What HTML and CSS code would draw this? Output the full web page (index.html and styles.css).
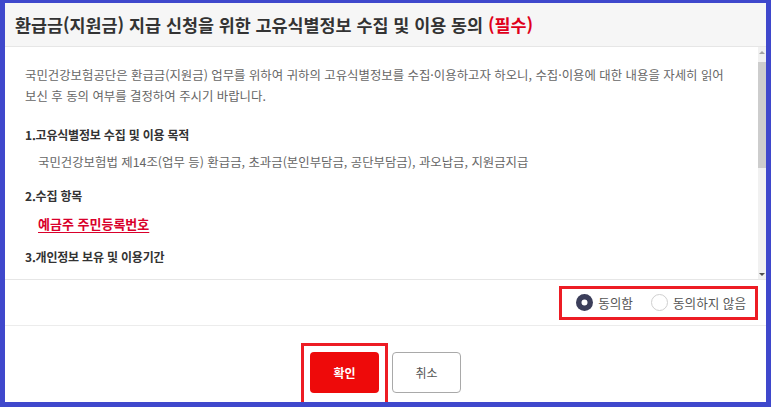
FILE: index.html
```html
<!DOCTYPE html>
<html lang="ko">
<head>
    <meta charset="UTF-8">
    <meta name="viewport" content="width=device-width, initial-scale=1.0">
    <title>고유식별정보 수집 및 이용 동의</title>
    <link rel="stylesheet" href="styles.css">
</head>
<body>
    <div class="modal">
        <div class="modal-header">
            <h2 class="modal-title">환급금(지원금) 지급 신청을 위한 고유식별정보 수집 및 이용 동의 <span class="required">(필수)</span></h2>
        </div>

        <div class="modal-body">
            <div class="body-scroll">
                <p class="intro">국민건강보험공단은 환급금(지원금) 업무를 위하여 귀하의 고유식별정보를 수집·이용하고자 하오니, 수집·이용에 대한 내용을 자세히 읽어<br>보신 후 동의 여부를 결정하여 주시기 바랍니다.</p>

                <div class="term-section">
                    <h3 class="term-title">1.고유식별정보 수집 및 이용 목적</h3>
                    <p class="term-text">국민건강보험법 제14조(업무 등) 환급금, 초과금(본인부담금, 공단부담금), 과오납금, 지원금지급</p>
                </div>

                <div class="term-section">
                    <h3 class="term-title">2.수집 항목</h3>
                    <p class="term-text highlight">예금주 주민등록번호</p>
                </div>

                <div class="term-section later">
                    <h3 class="term-title">3.개인정보 보유 및 이용기간</h3>
                    <p class="term-text">수집·이용 목적 달성 후 관련 법령에 따라 5년간 보관 후 파기</p>
                </div>

                <div class="term-section later">
                    <h3 class="term-title">4.동의를 거부할 권리 및 동의 거부 시 불이익</h3>
                    <p class="term-text">귀하는 고유식별정보 수집·이용에 대한 동의를 거부할 권리가 있습니다.</p>
                </div>
            </div>

            <div class="scrollbar">
                <span class="scroll-arrow up"></span>
                <div class="scroll-track">
                    <div class="scroll-thumb"></div>
                </div>
                <span class="scroll-arrow down"></span>
            </div>
        </div>

        <div class="agree-row">
            <div class="agree-group">
                <label class="radio-item">
                    <span class="radio checked"></span>
                    <span class="radio-label">동의함</span>
                </label>
                <label class="radio-item">
                    <span class="radio"></span>
                    <span class="radio-label">동의하지 않음</span>
                </label>
            </div>
        </div>

        <div class="modal-footer">
            <div class="mark-box">
                <button class="button primary">확인</button>
            </div>
            <button class="button">취소</button>
        </div>
    </div>
</body>
</html>
```

FILE: styles.css
```css
* {
    margin: 0;
    padding: 0;
    box-sizing: border-box;
    font-family: "Noto Sans CJK KR", "Noto Sans", sans-serif;
}

body {
    height: 407px;
    padding: 3px 5px 5px;
    background-color: #3f48cc;
    overflow: hidden;
}

.modal {
    height: 399px;
    background-color: #fff;
    display: flex;
    flex-direction: column;
    overflow: hidden;
}

.modal-header {
    height: 44px;
    flex-shrink: 0;
    display: flex;
    align-items: center;
    padding: 0 10px 1px;
    background-color: #f6f6f6;
    border-bottom: 1px solid #e6e6e6;
}

.modal-title {
    font-size: 17.4px;
    font-weight: 700;
    color: #333;
}

.required {
    color: #e0001b;
}

.modal-body {
    height: 233px;
    flex-shrink: 0;
    display: flex;
    border-bottom: 1px solid #e6e6e6;
}

.body-scroll {
    flex: 1;
    overflow: hidden;
    padding: 18px 20px 0;
}

.scrollbar {
    width: 8px;
    display: flex;
    flex-direction: column;
    align-items: center;
    background: #f1f1f1;
}

.scroll-arrow {
    height: 10px;
    flex-shrink: 0;
    display: flex;
    align-items: center;
}

.scroll-arrow::before {
    content: "";
    border-left: 3px solid transparent;
    border-right: 3px solid transparent;
}

.scroll-arrow.up::before {
    border-bottom: 3px solid #a3a3a3;
}

.scroll-arrow.down::before {
    border-top: 3px solid #505050;
}

.scroll-track {
    flex: 1;
    width: 100%;
    padding-top: 5px;
}

.scroll-thumb {
    height: 106px;
    background: #cdcdcd;
}

.intro {
    font-size: 12.4px;
    line-height: 21px;
    color: #666;
}

.term-section {
    margin-top: 12px;
}

.term-section:first-of-type {
    margin-top: 17px;
}

.term-title {
    font-size: 12px;
    line-height: 21px;
    font-weight: 700;
    color: #333;
    letter-spacing: -0.2px;
}

.term-text {
    margin-top: 7px;
    padding-left: 13px;
    font-size: 12.4px;
    line-height: 21px;
    color: #666;
}

.later .term-text {
    margin-top: 14px;
}

.term-text.highlight {
    font-size: 13px;
    font-weight: 700;
    color: #d9002b;
    text-decoration: underline;
    text-underline-offset: 3px;
}

.agree-row {
    height: 46px;
    flex-shrink: 0;
    display: flex;
    justify-content: flex-end;
    align-items: center;
    padding-right: 8px;
    border-bottom: 1px solid #ececec;
}

.agree-group {
    display: flex;
    align-items: center;
    gap: 18px;
    height: 34px;
    padding: 0 9px 0 14px;
    border: 3px solid #ed1c24;
}

.radio-item {
    display: flex;
    align-items: center;
    gap: 5px;
}

.radio {
    width: 17px;
    height: 17px;
    border-radius: 50%;
    border: 1px solid #cfcfcf;
    background: #fff;
}

.radio.checked {
    border: none;
    box-shadow: inset 0 0 0 5.5px #3b3e5a;
}

.radio-label {
    font-size: 12.6px;
    color: #555;
}

.modal-footer {
    height: 76px;
    flex-shrink: 0;
    display: flex;
    justify-content: center;
    align-items: flex-start;
    gap: 4px;
    padding: 17px 0 0 0;
    overflow: hidden;
}

.mark-box {
    padding: 6px 6px 12px;
    border: 3px solid #ed1c24;
}

.button {
    width: 69px;
    height: 41px;
    border: 1px solid #a9a9a9;
    border-radius: 4px;
    background: #fff;
    color: #555;
    font-size: 12px;
    cursor: pointer;
}

.mark-box + .button {
    margin-top: 9px;
    margin-right: 9px;
}

.button.primary {
    background: #ee0a0a;
    border: none;
    color: #fff;
    font-weight: 700;
}
```
